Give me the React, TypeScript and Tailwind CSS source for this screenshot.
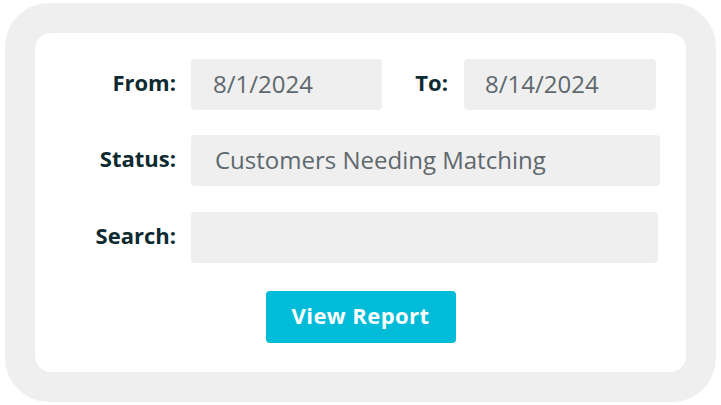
import React from "react";

const font = { fontFamily: "'Open Sans', Lato, sans-serif" };

function Label({ children }: { children: React.ReactNode }) {
  return (
    <div className="w-[141px] pb-[5px] text-right text-[22px] font-bold text-[#0c2a30] leading-none">{children}</div>
  );
}

export default function App() {
  return (
    <div className="w-[721px] h-[405px] bg-white pt-[3px] pl-[5px]" style={font}>
      <div className="w-[711px] h-[399px] rounded-[44px] bg-[#efefef] p-[30px]">
        <div className="w-full h-full rounded-[16px] bg-white pt-[26px] flex flex-col">
          <div className="flex items-center h-[51px]">
            <Label>From:</Label>
            <div className="ml-[15px] w-[191px] h-[51px] rounded-[4px] bg-[#efefef] flex items-center pl-[22px] pb-[2px] text-[24px] text-[#5e686d]">8/1/2024</div>
            <div className="w-[82px] pr-[16px] pb-[5px] text-right text-[22px] font-bold text-[#0c2a30] leading-none">To:</div>
            <div className="w-[192px] h-[51px] rounded-[4px] bg-[#efefef] flex items-center pl-[21px] pb-[2px] text-[24px] text-[#5e686d]">8/14/2024</div>
          </div>
          <div className="flex items-center h-[51px] mt-[25px]">
            <Label>Status:</Label>
            <div className="ml-[15px] w-[469px] h-[51px] rounded-[4px] bg-[#efefef] flex items-center pl-[24px] pb-[2px] text-[24px] text-[#5e686d]">Customers Needing Matching</div>
          </div>
          <div className="flex items-center h-[51px] mt-[26px]">
            <Label>Search:</Label>
            <div className="ml-[15px] w-[467px] h-[51px] rounded-[4px] bg-[#efefef]"></div>
          </div>
          <div className="flex justify-center mt-[28px]">
            <button className="w-[190px] h-[52px] rounded-[4px] bg-[#00bcd9] text-white text-[22px] font-bold tracking-[0.02em] pb-[3px]">View Report</button>
          </div>
        </div>
      </div>
    </div>
  );
}
